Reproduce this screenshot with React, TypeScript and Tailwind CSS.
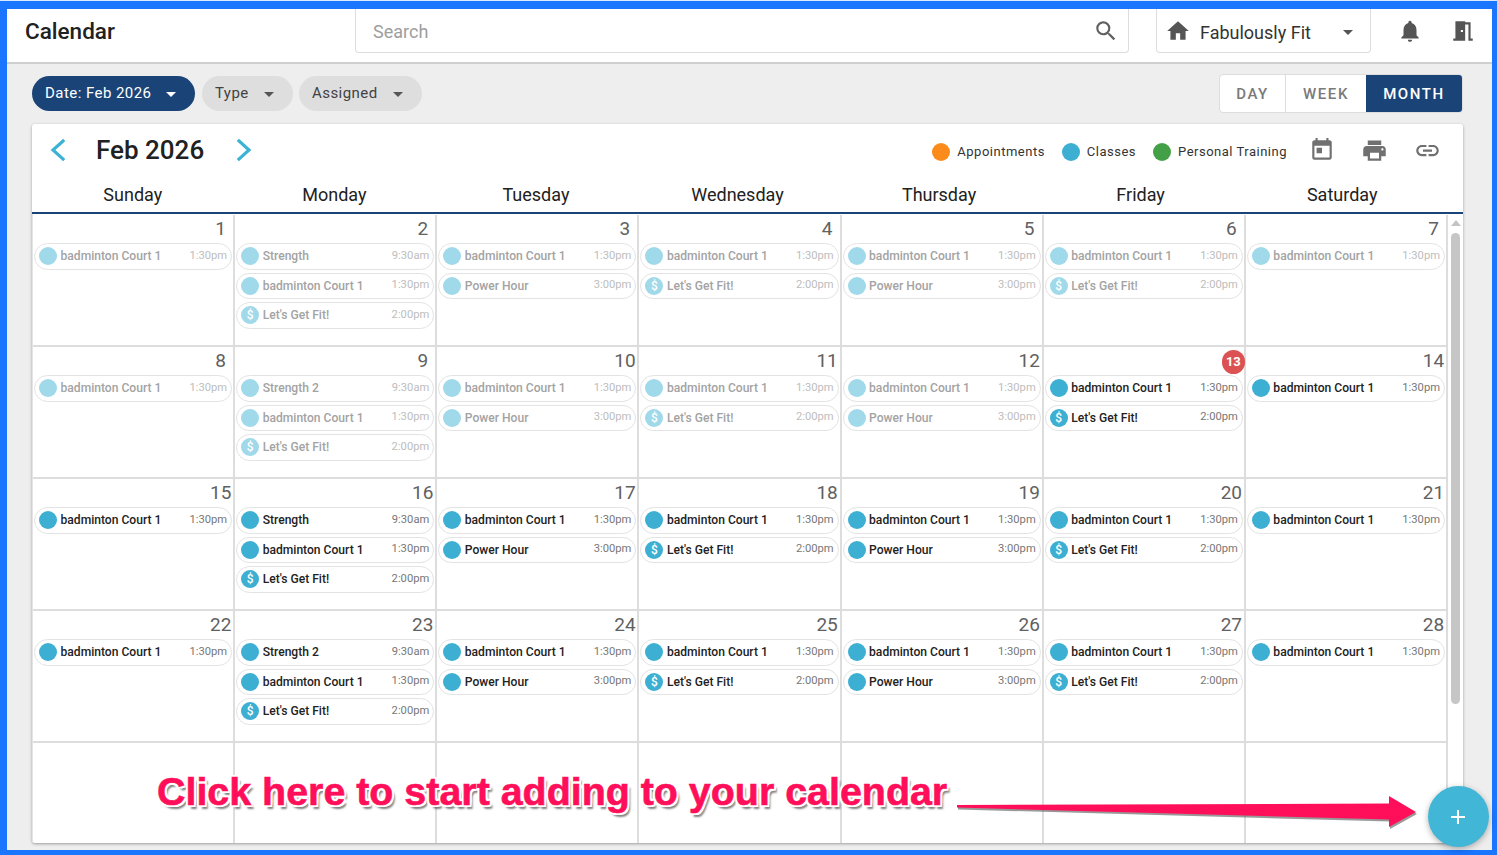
import React from "react";
import { MdSearch, MdHome, MdNotifications, MdMeetingRoom, MdToday, MdPrint, MdLink, MdArrowDropDown, MdAdd } from "react-icons/md";

type Ev = { name: string; time: string; paid?: boolean };
const B: Ev = { name: "badminton Court 1", time: "1:30pm" };
const P: Ev = { name: "Power Hour", time: "3:00pm" };
const L: Ev = { name: "Let's Get Fit!", time: "2:00pm", paid: true };
const S1: Ev = { name: "Strength", time: "9:30am" };
const S2: Ev = { name: "Strength 2", time: "9:30am" };

const DAYS = ["Sunday", "Monday", "Tuesday", "Wednesday", "Thursday", "Friday", "Saturday"];

function eventsFor(day: number): Ev[] {
  const wd = (day - 1) % 7;
  const week = Math.floor((day - 1) / 7);
  switch (wd) {
    case 1:
      return [week % 2 === 0 ? S1 : S2, B, L];
    case 2:
    case 4:
      return [B, P];
    case 3:
    case 5:
      return [B, L];
    default:
      return [B];
  }
}

function Chip({ ev, faded }: { ev: Ev; faded: boolean }) {
  return (
    <div className="ml-[1px] mr-[1px] mb-[3px] flex h-[26.5px] items-center rounded-full border border-[#e3e3e3] bg-white pl-[4px] pr-[4px]">
      <span className={"flex h-[18px] w-[18px] shrink-0 items-center justify-center rounded-full text-[12px] font-medium leading-none text-white " + (faded ? "bg-[#9fd9ea]" : "bg-[#3cafd3]")}>
        {ev.paid ? "$" : ""}
      </span>
      <span className={"ml-[3.5px] flex-1 truncate text-[12.1px] font-medium " + (faded ? "text-[#a3a3a3]" : "text-[#222222]")}>{ev.name}</span>
      <span className={"text-[11.2px] " + (faded ? "text-[#bdbdbd]" : "text-[#777777]")}>{ev.time}</span>
    </div>
  );
}

function Cell({ day }: { day: number }) {
  const faded = day < 13;
  return (
    <div className="relative h-[132px] border-r-2 border-b-2 border-[#dddddd]">
      <div className="flex h-[28px] justify-end pt-[2px]">
        {day === 13 ? (
          <span className="absolute right-[-1px] top-[3px] flex h-[24px] w-[23px] items-center justify-center rounded-full bg-[#dc5252] text-[13px] font-bold text-white">13</span>
        ) : (
          <span className="w-[25px] text-center text-[19px] leading-[24px] text-[#616161]">{day}</span>
        )}
      </div>
      {eventsFor(day).map((ev, i) => (
        <Chip key={i} ev={ev} faded={faded} />
      ))}
    </div>
  );
}

function Pill({ label, w, active }: { label: string; w: string; active?: boolean }) {
  return (
    <div className={"flex h-[35px] items-center justify-between rounded-full pl-[13px] pr-[12px] text-[15px] tracking-[0.45px] " + w + " " + (active ? "bg-[#1a4478] text-white" : "bg-[#dedede] text-[#424242]")}>
      <span>{label}</span>
      <MdArrowDropDown className={"h-[24px] w-[24px] " + (active ? "text-white" : "text-[#555555]")} />
    </div>
  );
}

function Legend({ color, label, className }: { color: string; label: string; className: string }) {
  return (
    <div className={"flex items-center " + className}>
      <span className={"h-[18px] w-[18px] rounded-full " + color} />
      <span className="ml-[7px] text-[13px] tracking-[0.5px] text-[#333333]">{label}</span>
    </div>
  );
}

function Chevron({ d, className }: { d: string; className: string }) {
  return (
    <svg className={className} width="38" height="38" viewBox="0 0 38 38" fill="none">
      <path d={d} stroke="#3cb2d5" strokeWidth="3.2" strokeLinecap="square" strokeLinejoin="miter" />
    </svg>
  );
}

export default function App() {
  const days = Array.from({ length: 28 }, (_, i) => i + 1);
  return (
    <div className="relative h-[855px] w-[1497px] overflow-hidden border-t border-t-[#dbe9ff] bg-[#1a75ff] pt-[8px] pr-[5px] pb-[5px] pl-[7px] font-['Roboto',sans-serif]">
      <div className="flex h-[841px] flex-col bg-[#eeeeee]">
        <header className="flex h-[55px] shrink-0 items-start border-b-2 border-[#cfcfcf] bg-white">
          <div className="flex h-[44px] w-[348px] items-center pl-[18px] pt-[2px] text-[22.5px] font-medium text-[#212121]">Calendar</div>
          <div className="flex h-[44px] w-[774px] items-center justify-between rounded-b-[4px] border border-t-0 border-[#dddddd] pl-[17px] pr-[9px] text-[18px] text-[#9e9e9e]">
            <span className="pt-[2px]">Search</span>
            <MdSearch className="h-[26px] w-[26px] text-[#616161]" />
          </div>
          <div className="ml-[27px] flex h-[44px] w-[215px] items-center rounded-b-[4px] border border-t-0 border-[#dddddd] pl-[8px] text-[18px] text-[#333333]">
            <MdHome className="h-[26px] w-[26px] text-[#555555]" />
            <span className="ml-[9px] flex-1 pt-[3px]">Fabulously Fit</span>
            <MdArrowDropDown className="mr-[10px] mt-[2px] h-[24px] w-[24px] text-[#555555]" />
          </div>
          <MdNotifications className="ml-[26px] mt-[9px] h-[26px] w-[26px] text-[#555555]" />
          <MdMeetingRoom className="ml-[27px] mt-[9px] h-[26px] w-[26px] text-[#555555]" />
        </header>

        <div className="flex h-[60px] shrink-0 items-center pb-[1px] pl-[25px] pr-[29px]">
          <Pill label="Date: Feb 2026" w="w-[163px]" active />
          <div className="ml-[7px]"><Pill label="Type" w="w-[91px]" /></div>
          <div className="ml-[6px]"><Pill label="Assigned" w="w-[123px]" /></div>
          <div className="ml-auto flex h-[39px] overflow-hidden rounded-[4px] border border-[#dddddd] bg-white text-[15px] font-medium tracking-[1.6px] text-[#7a7a7a]">
            <div className="flex w-[66px] items-center justify-center border-r border-[#dddddd] pt-[2px]">DAY</div>
            <div className="flex w-[80px] items-center justify-center pt-[2px]">WEEK</div>
            <div className="flex w-[96px] items-center justify-center bg-[#1a4478] pt-[2px] text-white">MONTH</div>
          </div>
        </div>

        <section className="ml-[25px] flex h-[719px] w-[1431px] flex-col overflow-hidden rounded-[3px] bg-white shadow-[0_1px_3px_rgba(0,0,0,0.35)]">
          <div className="flex h-[52px] shrink-0 items-center">
            <Chevron d="M24 10 L14 19 L24 28" className="ml-[7px]" />
            <span className="ml-[19px] text-[26px] font-medium text-[#212121]">Feb 2026</span>
            <Chevron d="M14 10 L24 19 L14 28" className="ml-[21px]" />
            <div className="ml-auto flex items-center pt-[4px]">
              <Legend color="bg-[#fb8c1c]" label="Appointments" className="" />
              <Legend color="bg-[#3cafd3]" label="Classes" className="ml-[17px]" />
              <Legend color="bg-[#43a047]" label="Personal Training" className="ml-[17px]" />
            </div>
            <MdToday className="ml-[22px] h-[26px] w-[26px] text-[#707070]" />
            <MdPrint className="ml-[26px] h-[27px] w-[27px] text-[#707070]" />
            <MdLink className="ml-[26px] mr-[22px] h-[27px] w-[27px] text-[#707070]" />
          </div>

          <div className="grid h-[36px] w-[1411px] shrink-0 grid-cols-7 pt-[4px] text-center text-[18px] leading-[30px] text-[#212121]">
            {DAYS.map((d) => (
              <div key={d}>{d}</div>
            ))}
          </div>
          <div className="h-[2px] shrink-0 bg-[#1a4478]" />

          <div className="flex min-h-0 flex-1 overflow-hidden">
            <div className="grid w-[1416px] shrink-0 grid-cols-7 content-start border-l border-[#e4e4e4] pt-[1px]">
              {days.map((d) => (
                <Cell key={d} day={d} />
              ))}
              {Array.from({ length: 7 }, (_, i) => (
                <div key={i} className="h-[132px] border-r-2 border-[#dddddd]" />
              ))}
            </div>
            <div className="flex w-[15px] flex-col items-center">
              <div className="mt-[6px] h-0 w-0 border-x-[5px] border-b-[6px] border-x-transparent border-b-[#c4c4c4]" />
              <div className="mt-[7px] h-[471px] w-[9px] rounded-full bg-[#c6c6c6]" />
            </div>
          </div>
        </section>
      </div>

      <div className="absolute left-[157px] top-[765px] whitespace-nowrap font-['Liberation_Sans',sans-serif] text-[39.4px] font-bold leading-[50px] text-[#ff0f5a] [-webkit-text-stroke:0.6px_#ff0f5a] [text-shadow:2px_0_0_#fff,-2px_0_0_#fff,0_2px_0_#fff,0_-2px_0_#fff,2px_2px_0_#fff,-2px_2px_0_#fff,2px_-2px_0_#fff,-2px_-2px_0_#fff,3px_4px_2px_rgba(0,0,0,0.5)]">
        Click here to start adding to your calendar
      </div>

      <svg className="absolute left-[950px] top-[789px]" width="478" height="44" viewBox="0 0 478 44">
        <polygon points="7,15 439,13.5 439,6 466,22 439,37 439,29.5 7,17.5" fill="#555555" opacity="0.6" transform="translate(1,2)" />
        <polygon points="7,15 439,13.5 439,6 466,22 439,37 439,29.5 7,17.5" fill="#ff0f5a" />
      </svg>

      <div className="absolute left-[1428px] top-[785px] flex h-[61px] w-[61px] items-center justify-center rounded-full bg-[#41b6d6] pr-[1px] shadow-[0_2px_6px_rgba(0,0,0,0.3)]">
        <MdAdd className="h-[24px] w-[24px] text-white" />
      </div>
    </div>
  );
}
